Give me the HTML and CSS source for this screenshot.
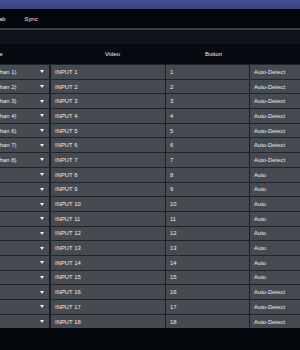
FILE: index.html
```html
<!DOCTYPE html>
<html>
<head>
    <title>Input Mapping</title>
    <link rel="stylesheet" href="styles.css">
</head>
<body>
    <div class="app">
        <div class="titlebar"></div>
        <div class="tabs">
            <span class="tab">Tab</span>
            <span class="tab">Sync</span>
        </div>
        <div class="toolbar"></div>
        <div class="head">
            <span class="h-name">Source</span>
            <span class="h-video">Video</span>
            <span class="h-button">Button</span>
        </div>
        <div class="rows" id="rows"></div>
    </div>

    <script>
        // build the 18 mapping rows
        var names = ['Camera (Chan 1)', 'Camera (Chan 2)', 'Camera (Chan 3)', 'Camera (Chan 4)',
                     'Camera (Chan 6)', 'Camera (Chan 7)', 'Camera (Chan 8)'];
        var rows = document.getElementById('rows');
        for (var i = 1; i <= 18; i++) {
            var mode = (i >= 8 && i <= 15) ? 'Auto' : 'Auto-Detect';
            var row = document.createElement('div');
            row.className = 'row';
            row.innerHTML =
                '<div class="cell sel"><span>' + (names[i - 1] || '') + '</span><i class="arrow"></i></div>' +
                '<div class="cell">INPUT ' + i + '</div>' +
                '<div class="cell">' + i + '</div>' +
                '<div class="cell">' + mode + '</div>';
            rows.appendChild(row);
        }
    </script>
</body>
</html>
```

FILE: styles.css
```css
html, body {
    margin: 0;
    background-color: #05090e;
    overflow: hidden;
    font-family: "Liberation Sans", Arial, sans-serif;
}

.app {
    width: 380px;
    margin-left: -60px;
    color: #ececec;
    font-size: 5.9px;
}

.titlebar {
    height: 9px;
    background: linear-gradient(#454f96, #3a4385);
}

.tabs {
    height: 19px;
    display: flex;
    align-items: center;
    gap: 19px;
    padding-left: 56px;
    background-color: #04080d;
    border-bottom: 2px solid #3a3e44;
}

.toolbar {
    height: 14px;
    background-color: #0e1319;
}

.head {
    height: 20px;
    display: flex;
    align-items: center;
    position: relative;
    background-color: #070b11;
}

.head span {
    position: absolute;
}

.h-name { left: 44px; }
.h-video { left: 165px; }
.h-button { left: 265px; }

.rows {
    display: flex;
    flex-direction: column;
}

.row {
    display: grid;
    grid-template-columns: 111px 115px 84px 1fr;
    height: 13.7px;
    border-top: 1px solid #212429;
    background-color: #464a51;
}

.cell {
    display: flex;
    align-items: center;
    padding-left: 4px;
    border-right: 1px solid #1a1d21;
}

.sel {
    justify-content: flex-end;
    gap: 17px;
    padding-right: 5px;
    border-right: 2px solid #1a1d21;
}

.sel span {
    margin-right: auto;
    padding-left: 27px;
}

.arrow {
    width: 0;
    height: 0;
    border-left: 2.5px solid transparent;
    border-right: 2.5px solid transparent;
    border-top: 3px solid #f0f0f0;
}
```
